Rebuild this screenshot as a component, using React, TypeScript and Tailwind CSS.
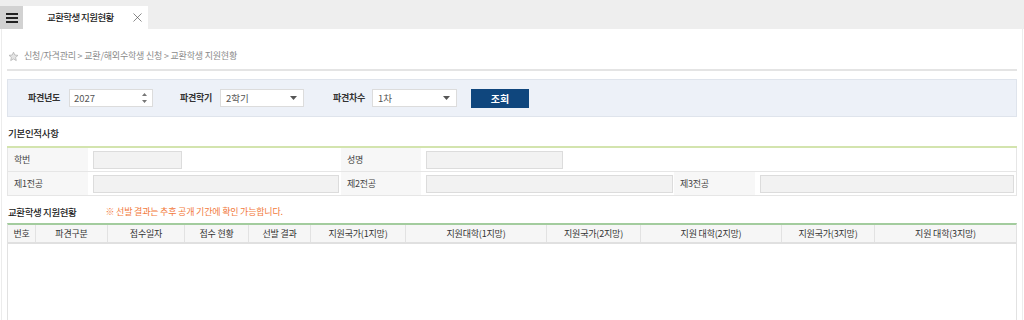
import { X } from "lucide-react";

const FONT = "font-['Noto_Sans_CJK_KR','Noto_Sans',sans-serif]";

const COLUMNS: { label: string; width: string }[] = [
  { label: "번호", width: "w-[28px]" },
  { label: "파견구분", width: "w-[72px]" },
  { label: "접수일자", width: "w-[77px]" },
  { label: "접수 현황", width: "w-[64px]" },
  { label: "선발 결과", width: "w-[62px]" },
  { label: "지원국가(1지망)", width: "w-[95px]" },
  { label: "지원대학(1지망)", width: "w-[141px]" },
  { label: "지원국가(2지망)", width: "w-[94px]" },
  { label: "지원 대학(2지망)", width: "w-[141px]" },
  { label: "지원국가(3지망)", width: "w-[93px]" },
  { label: "지원 대학(3지망)", width: "flex-1" },
];

function Caret() {
  return (
    <svg width="7" height="4" viewBox="0 0 7 4" className="shrink-0">
      <path d="M0 0h7L3.5 4z" fill="#555" />
    </svg>
  );
}

function SelectBox({ value, width }: { value: string; width: string }) {
  return (
    <div
      className={`flex h-[18px] items-center justify-between border border-[#dcdcdc] bg-white pl-[5px] pr-[6px] text-[9.5px] text-[#555] ${width}`}
    >
      <span>{value}</span>
      <Caret />
    </div>
  );
}

function ReadOnlyInput({ width }: { width: string }) {
  return (
    <div className={`h-[18px] border border-[#dcdcdc] bg-[#f2f2f2] ${width}`} />
  );
}

function LabelCell({ text, width }: { text: string; width: string }) {
  return (
    <div
      className={`flex h-full items-center bg-[#f7f7f7] pl-[6px] text-[9px] tracking-[-0.3px] text-[#444] ${width}`}
    >
      {text}
    </div>
  );
}

export default function App() {
  return (
    <div className={`flex min-h-[320px] w-[1024px] flex-col bg-white ${FONT}`}>
      {/* Tab bar */}
      <div className="flex h-[29px] items-end bg-[#eeeeee]">
        <div className="flex h-[23px] w-[23px] flex-col items-center justify-center gap-[2px] bg-[#d2d2d2]">
          <span className="h-[2px] w-[12px] bg-[#222]" />
          <span className="h-[2px] w-[12px] bg-[#222]" />
          <span className="h-[2px] w-[12px] bg-[#222]" />
        </div>
        <div className="flex h-[23px] w-[125px] items-center bg-white">
          <span className="ml-[24px] whitespace-nowrap text-[9.5px] font-medium tracking-[-0.6px] text-[#222]">
            교환학생 지원현황
          </span>
          <X size={15} strokeWidth={1} className="ml-[16px] shrink-0 text-[#444]" />
        </div>
      </div>

      {/* Content */}
      <div className="mx-[1px] flex flex-1 flex-col border-x border-[#ececec] px-[5px]">
        {/* Breadcrumb */}
        <div className="mt-[17px] flex h-[20px] items-center pl-[1px] text-[9px] tracking-[-0.2px] text-[#8a8a8a]">
          <svg width="11" height="11" viewBox="0 0 24 24" className="mr-[5px]">
            <path
              d="M12 2.5l2.9 6.3 6.9.7-5.2 4.6 1.5 6.8L12 17.4l-6.1 3.5 1.5-6.8-5.2-4.6 6.9-.7z"
              fill="#e4e4e4"
              stroke="#b0b0b0"
              strokeWidth="1.6"
              strokeLinejoin="round"
            />
          </svg>
          <span>신청/자격관리 &gt; 교환/해외수학생 신청 &gt; 교환학생 지원현황</span>
        </div>
        <div className="mt-[3px] border-t-2 border-[#e4e4e4]" />

        {/* Search panel */}
        <div className="mt-[8px] flex h-[38px] items-center border border-[#dfe4ec] bg-[#edf1f8] pl-[20px] text-[9px]">
          <span className="w-[41px] font-semibold tracking-[-0.3px] text-[#333]">파견년도</span>
          <div className="flex h-[18px] w-[84px] items-center justify-between border border-[#dcdcdc] bg-white pl-[4px] pr-[5px] text-[9.5px] text-[#555]">
            <span>2027</span>
            <svg width="5" height="10" viewBox="0 0 5 10">
              <path d="M0 3L2.5 0 5 3z M0 7L2.5 10 5 7z" fill="#777" />
            </svg>
          </div>
          <span className="ml-[27px] w-[40px] font-semibold tracking-[-0.3px] text-[#333]">파견학기</span>
          <SelectBox value="2학기" width="w-[84px]" />
          <span className="ml-[29px] w-[39px] font-semibold tracking-[-0.3px] text-[#333]">파견차수</span>
          <SelectBox value="1차" width="w-[85px]" />
          <button className="ml-[14px] flex h-[19px] w-[58px] items-center justify-center bg-[#0f467d] text-[10px] font-semibold text-white">
            조회
          </button>
        </div>

        {/* Basic info */}
        <div className="mt-[6px] flex h-[20px] items-center pl-[1px] text-[9.5px] font-medium tracking-[-0.3px] text-[#222]">
          기본인적사항
        </div>
        <div className="mt-[3px] border-t-2 border-[#d3e4ae]" />
        <div className="flex flex-col border-x border-[#e6e6e6]">
          <div className="flex h-[24px] items-center border-b border-[#e6e6e6]">
            <LabelCell text="학번" width="w-[80px]" />
            <div className="flex h-full w-[253px] items-center pl-[5px]">
              <ReadOnlyInput width="w-[89px]" />
            </div>
            <LabelCell text="성명" width="w-[80px]" />
            <div className="flex h-full flex-1 items-center pl-[5px]">
              <ReadOnlyInput width="w-[137px]" />
            </div>
          </div>
          <div className="flex h-[24px] items-center border-b border-[#e6e6e6]">
            <LabelCell text="제1전공" width="w-[80px]" />
            <div className="flex h-full w-[253px] items-center pl-[5px]">
              <ReadOnlyInput width="w-[246px]" />
            </div>
            <LabelCell text="제2전공" width="w-[80px]" />
            <div className="flex h-full w-[253px] items-center pl-[5px]">
              <ReadOnlyInput width="w-[247px]" />
            </div>
            <LabelCell text="제3전공" width="w-[81px]" />
            <div className="flex h-full flex-1 items-center pl-[5px] pr-[2px]">
              <ReadOnlyInput width="flex-1" />
            </div>
          </div>
        </div>

        {/* Application status */}
        <div className="mt-[6px] flex h-[20px] items-center pl-[1px]">
          <span className="text-[9.5px] font-medium tracking-[-0.4px] text-[#222]">교환학생 지원현황</span>
          <span className="ml-[29px] text-[9px] tracking-[-0.2px] text-[#f27a3c]">
            ※ 선발 결과는 추후 공개 기간에 확인 가능합니다.
          </span>
        </div>
        <div className="mt-[1px] flex flex-1 flex-col border-x border-t-2 border-x-[#e2e2e2] border-t-[#a3cc9e]">
          <div className="flex h-[19px] border-b-2 border-[#e0e0e0] bg-[#f6f6f6]">
            {COLUMNS.map((c, i) => (
              <div
                key={c.label}
                className={`flex items-center justify-center text-[9px] tracking-[-0.2px] text-[#333] ${c.width} ${
                  i < COLUMNS.length - 1 ? "border-r border-[#e2e2e2]" : ""
                }`}
              >
                {c.label}
              </div>
            ))}
          </div>
          <div className="flex-1" />
        </div>
      </div>
    </div>
  );
}
